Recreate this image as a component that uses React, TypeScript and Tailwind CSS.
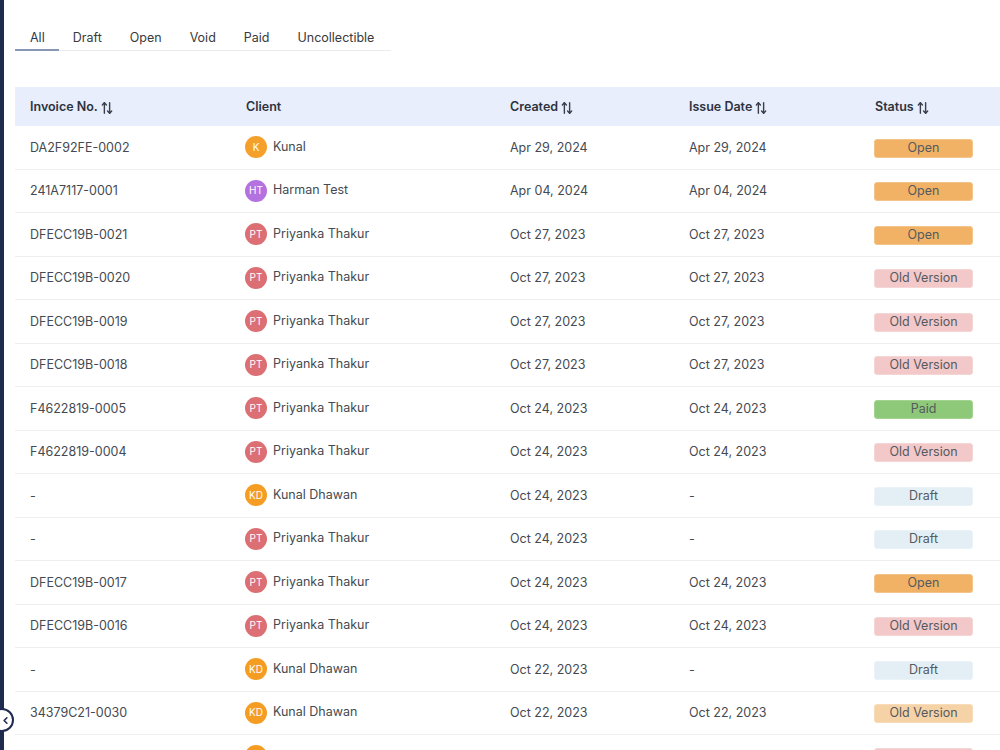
import React from "react";

type Row = {
  inv: string;
  client: string;
  initials: string;
  avatar: string;
  created: string;
  issue: string;
  status: "Open" | "Old Version" | "Paid" | "Draft" | "Old Version2";
};

const rows: Row[] = [
  { inv: "DA2F92FE-0002", client: "Kunal", initials: "K", avatar: "bg-[#f5a02a]", created: "Apr 29, 2024", issue: "Apr 29, 2024", status: "Open" },
  { inv: "241A7117-0001", client: "Harman Test", initials: "HT", avatar: "bg-[#b471e0]", created: "Apr 04, 2024", issue: "Apr 04, 2024", status: "Open" },
  { inv: "DFECC19B-0021", client: "Priyanka Thakur", initials: "PT", avatar: "bg-[#dc6f73]", created: "Oct 27, 2023", issue: "Oct 27, 2023", status: "Open" },
  { inv: "DFECC19B-0020", client: "Priyanka Thakur", initials: "PT", avatar: "bg-[#dc6f73]", created: "Oct 27, 2023", issue: "Oct 27, 2023", status: "Old Version" },
  { inv: "DFECC19B-0019", client: "Priyanka Thakur", initials: "PT", avatar: "bg-[#dc6f73]", created: "Oct 27, 2023", issue: "Oct 27, 2023", status: "Old Version" },
  { inv: "DFECC19B-0018", client: "Priyanka Thakur", initials: "PT", avatar: "bg-[#dc6f73]", created: "Oct 27, 2023", issue: "Oct 27, 2023", status: "Old Version" },
  { inv: "F4622819-0005", client: "Priyanka Thakur", initials: "PT", avatar: "bg-[#dc6f73]", created: "Oct 24, 2023", issue: "Oct 24, 2023", status: "Paid" },
  { inv: "F4622819-0004", client: "Priyanka Thakur", initials: "PT", avatar: "bg-[#dc6f73]", created: "Oct 24, 2023", issue: "Oct 24, 2023", status: "Old Version" },
  { inv: "-", client: "Kunal Dhawan", initials: "KD", avatar: "bg-[#f59c22]", created: "Oct 24, 2023", issue: "-", status: "Draft" },
  { inv: "-", client: "Priyanka Thakur", initials: "PT", avatar: "bg-[#dc6f73]", created: "Oct 24, 2023", issue: "-", status: "Draft" },
  { inv: "DFECC19B-0017", client: "Priyanka Thakur", initials: "PT", avatar: "bg-[#dc6f73]", created: "Oct 24, 2023", issue: "Oct 24, 2023", status: "Open" },
  { inv: "DFECC19B-0016", client: "Priyanka Thakur", initials: "PT", avatar: "bg-[#dc6f73]", created: "Oct 24, 2023", issue: "Oct 24, 2023", status: "Old Version" },
  { inv: "-", client: "Kunal Dhawan", initials: "KD", avatar: "bg-[#f59c22]", created: "Oct 22, 2023", issue: "-", status: "Draft" },
  { inv: "34379C21-0030", client: "Kunal Dhawan", initials: "KD", avatar: "bg-[#f59c22]", created: "Oct 22, 2023", issue: "Oct 22, 2023", status: "Old Version2" },
  { inv: "34379C21-0029", client: "Kunal Dhawan", initials: "KD", avatar: "bg-[#f59c22]", created: "Oct 22, 2023", issue: "Oct 22, 2023", status: "Old Version" },
];

const badge: Record<Row["status"], { cls: string; label: string }> = {
  Open: { cls: "bg-[#f1b265] border-[#f3c48a]", label: "Open" },
  "Old Version": { cls: "bg-[#f2c8c9] border-[#f5d6d6]", label: "Old Version" },
  Paid: { cls: "bg-[#8ec979] border-[#a3d391]", label: "Paid" },
  Draft: { cls: "bg-[#e3eff5] border-[#eaf3f8]", label: "Draft" },
  "Old Version2": { cls: "bg-[#f6d3a6] border-[#f8dcb8]", label: "Old Version" },
};

function SortIcon() {
  return (
    <svg width="12" height="14" viewBox="0 0 20 24" fill="none" stroke="#3a3f4b" strokeWidth="2.4" strokeLinecap="round" strokeLinejoin="round" className="ml-[3px] inline-block">
      <path d="m18 17-3.5 4-3.5-4" />
      <path d="M14.5 21V3" />
      <path d="m2 7 3.5-4 3.5 4" />
      <path d="M5.5 3v18" />
    </svg>
  );
}

const tabs = ["All", "Draft", "Open", "Void", "Paid", "Uncollectible"];

export default function App() {
  const font = { fontFamily: "Inter, 'Noto Sans', sans-serif" };
  return (
    <div className="relative w-[1000px] h-[750px] overflow-hidden bg-white flex" style={font}>
      <div className="w-[4px] shrink-0 bg-[#1f2b4e]" />
      <div className="flex-1 pl-[11px] pt-[25px] flex flex-col">
        <div className="flex w-[376px] border-b border-[#ececec]">
          {tabs.map((t, i) => (
            <div
              key={t}
              className={`px-[14px] h-[26px] pt-[2px] flex items-center text-[12.5px] -mb-px ${
                i === 0 ? "pl-[15px] text-[#2c3a55] border-b-2 border-[#8a97b4]" : "text-[#3a3a3a] border-b-2 border-transparent"
              }`}
            >
              {t}
            </div>
          ))}
        </div>

        <div className="mt-[36px] w-[985px]">
          <div className="grid grid-cols-[216px_264px_179px_186px_1fr] h-[39px] pt-[2px] items-center bg-[#e8eefb] text-[12.5px] font-semibold text-[#2e3340]">
            <div className="pl-[15px] flex items-center">Invoice No.<SortIcon /></div>
            <div className="pl-[15px]">Client</div>
            <div className="pl-[15px] flex items-center">Created<SortIcon /></div>
            <div className="pl-[15px] flex items-center">Issue Date<SortIcon /></div>
            <div className="pl-[15px] flex items-center">Status<SortIcon /></div>
          </div>
          {rows.map((r, i) => (
            <div
              key={i}
              className="grid grid-cols-[216px_264px_179px_186px_1fr] h-[43.5px] pt-[2px] items-center border-b border-[#eeeeee] text-[12.5px] text-[#444a52]"
            >
              <div className="pl-[15px]">{r.inv}</div>
              <div className="pl-[14px] flex items-center -mt-[2px]">
                <div className={`w-[22px] h-[22px] rounded-full ${r.avatar} text-white text-[10px] flex items-center justify-center`}>
                  {r.initials}
                </div>
                <span className="ml-[6px]">{r.client}</span>
              </div>
              <div className="pl-[15px]">{r.created}</div>
              <div className="pl-[15px]">{r.issue}</div>
              <div className="pl-[14px]">
                <div className={`w-[99px] h-[19px] rounded-[3px] border flex items-center justify-center text-[12.5px] text-[#555a60] ${badge[r.status].cls}`}>
                  {badge[r.status].label}
                </div>
              </div>
            </div>
          ))}
        </div>
      </div>

      <div className="absolute left-[-10px] top-[708px] w-[24px] h-[24px] rounded-full bg-white border-2 border-[#1f2b4e] flex items-center justify-center">
        <svg width="11" height="11" viewBox="0 0 24 24" fill="none" stroke="#1f2b4e" strokeWidth="3.5" strokeLinecap="round" strokeLinejoin="round" className="ml-[7px]">
          <path d="m15 18-6-6 6-6" />
        </svg>
      </div>
    </div>
  );
}
